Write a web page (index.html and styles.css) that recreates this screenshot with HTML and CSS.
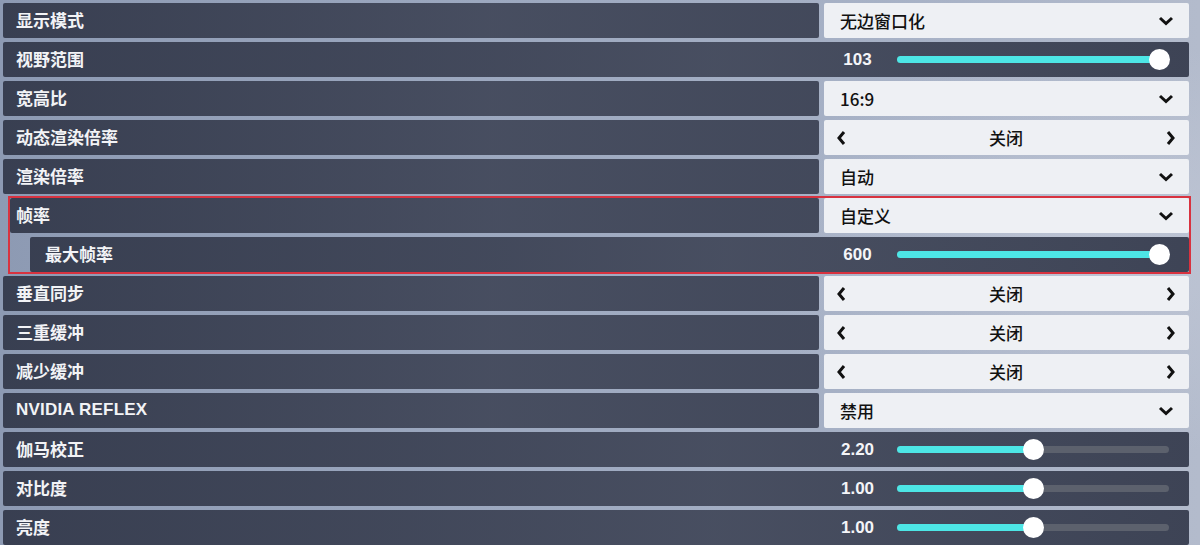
FILE: index.html
```html
<!DOCTYPE html>
<html lang="zh">
<head>
<meta charset="utf-8">
<link rel="stylesheet" href="styles.css">
</head>
<body>
<div class="panel">
  <div class="row"><div class="label">显示模式</div><div class="ctl dropdown"><span>无边窗口化</span><svg class="chev" viewBox="0 0 16 10"><path d="M2 2 L8 7.5 L14 2"/></svg></div></div>
  <div class="row slide"><div class="label">视野范围</div><div class="ctl slider"><span class="val">103</span><div class="track"><div class="fill" style="width:262px"></div><div class="knob" style="left:251.5px"></div></div></div></div>
  <div class="row"><div class="label">宽高比</div><div class="ctl dropdown"><span>16:9</span><svg class="chev" viewBox="0 0 16 10"><path d="M2 2 L8 7.5 L14 2"/></svg></div></div>
  <div class="row"><div class="label">动态渲染倍率</div><div class="ctl cycle"><svg class="arr" viewBox="0 0 10 16"><path d="M8 2 L3 8 L8 14"/></svg><span>关闭</span><svg class="arr" viewBox="0 0 10 16"><path d="M2 2 L7 8 L2 14"/></svg></div></div>
  <div class="row"><div class="label">渲染倍率</div><div class="ctl dropdown"><span>自动</span><svg class="chev" viewBox="0 0 16 10"><path d="M2 2 L8 7.5 L14 2"/></svg></div></div>
  <div class="group">
    <div class="row inner"><div class="label">帧率</div><div class="ctl dropdown"><span>自定义</span><svg class="chev" viewBox="0 0 16 10"><path d="M2 2 L8 7.5 L14 2"/></svg></div></div>
    <div class="row slide sub"><div class="label">最大帧率</div><div class="ctl slider"><span class="val">600</span><div class="track"><div class="fill" style="width:262px"></div><div class="knob" style="left:251.5px"></div></div></div></div>
  </div>
  <div class="row"><div class="label">垂直同步</div><div class="ctl cycle"><svg class="arr" viewBox="0 0 10 16"><path d="M8 2 L3 8 L8 14"/></svg><span>关闭</span><svg class="arr" viewBox="0 0 10 16"><path d="M2 2 L7 8 L2 14"/></svg></div></div>
  <div class="row"><div class="label">三重缓冲</div><div class="ctl cycle"><svg class="arr" viewBox="0 0 10 16"><path d="M8 2 L3 8 L8 14"/></svg><span>关闭</span><svg class="arr" viewBox="0 0 10 16"><path d="M2 2 L7 8 L2 14"/></svg></div></div>
  <div class="row"><div class="label">减少缓冲</div><div class="ctl cycle"><svg class="arr" viewBox="0 0 10 16"><path d="M8 2 L3 8 L8 14"/></svg><span>关闭</span><svg class="arr" viewBox="0 0 10 16"><path d="M2 2 L7 8 L2 14"/></svg></div></div>
  <div class="row"><div class="label latin">NVIDIA REFLEX</div><div class="ctl dropdown"><span>禁用</span><svg class="chev" viewBox="0 0 16 10"><path d="M2 2 L8 7.5 L14 2"/></svg></div></div>
  <div class="row slide"><div class="label">伽马校正</div><div class="ctl slider"><span class="val">2.20</span><div class="track"><div class="fill" style="width:136px"></div><div class="knob" style="left:125.5px"></div></div></div></div>
  <div class="row slide"><div class="label">对比度</div><div class="ctl slider"><span class="val">1.00</span><div class="track"><div class="fill" style="width:136px"></div><div class="knob" style="left:125.5px"></div></div></div></div>
  <div class="row slide"><div class="label">亮度</div><div class="ctl slider"><span class="val">1.00</span><div class="track"><div class="fill" style="width:136px"></div><div class="knob" style="left:125.5px"></div></div></div></div>
</div>
</body>
</html>
```

FILE: styles.css
```css
* { box-sizing: border-box; }
html, body { margin: 0; padding: 0; }
body {
  width: 1200px;
  height: 545px;
  overflow: hidden;
  font-family: "Liberation Sans", "Noto Sans CJK SC", sans-serif;
  background:
    radial-gradient(ellipse 500px 300px at 1100px 250px, rgba(200,206,220,0.55), rgba(200,206,220,0) 70%),
    linear-gradient(90deg, #8d9ab3 0%, #9ca8bf 40%, #a9b3c7 80%, #b3bbcc 100%);
}
.panel {
  width: 1189px;
  padding: 3px 0 0 3px;
  display: flex;
  flex-direction: column;
  gap: 4px;
}
.row {
  height: 35px;
  display: flex;
  gap: 5px;
}
.label {
  flex: 1;
  display: flex;
  align-items: center;
  padding: 0 0 2px 13px;
  color: #f2f3f6;
  font-weight: bold;
  font-size: 17px;
  background: linear-gradient(90deg, rgba(52,58,76,0.95), rgba(62,68,86,0.9) 60%, rgba(58,64,82,0.92));
  border-radius: 2px;
}
.label.latin { letter-spacing: 0.2px; padding-bottom: 1px; }
.ctl {
  width: 365px;
  display: flex;
  align-items: center;
  border-radius: 2px;
}
.dropdown, .cycle {
  background: #eef0f4;
  color: #111;
  font-size: 17px;
  font-weight: 500;
}
.dropdown { padding: 0 15px 0 16px; justify-content: space-between; }
.dropdown span { font-family: "Noto Sans CJK SC", "Liberation Sans", sans-serif; }
.chev { width: 16px; height: 10px; }
.chev path { fill: none; stroke: #111; stroke-width: 3; stroke-linejoin: miter; stroke-linecap: butt; }
.cycle { padding: 0 13px 0 12px; justify-content: space-between; }
.cycle span { font-family: "Noto Sans CJK SC", sans-serif; }
.arr { width: 10px; height: 16px; }
.arr path { fill: none; stroke: #111; stroke-width: 3; stroke-linejoin: miter; }

.slide {
  gap: 0;
  background: linear-gradient(90deg, rgba(52,58,76,0.95), rgba(62,68,86,0.9) 60%, rgba(55,61,79,0.95));
  border-radius: 2px;
}
.slide .label { background: none; }
.slider { padding-right: 20px; }
.val {
  width: 67px;
  text-align: center;
  color: #f4f5f8;
  font-weight: bold;
  font-size: 17px;
}
.track {
  margin-left: 6px;
  width: 272px;
  height: 7px;
  border-radius: 4px;
  background: #5c616d;
  position: relative;
}
.fill {
  height: 7px;
  border-radius: 4px;
  background: #4de6e6;
}
.knob {
  position: absolute;
  top: -7px;
  width: 21px;
  height: 21px;
  border-radius: 50%;
  background: #fff;
}

.group {
  position: relative;
  display: flex;
  flex-direction: column;
  gap: 4px;
}
.group::after {
  content: "";
  position: absolute;
  left: 5px;
  right: -2px;
  top: -2px;
  bottom: -2px;
  border: 2px solid #d8323f;
  pointer-events: none;
}
.inner { margin-left: 7px; }
.inner .label { padding-left: 6px; }
.sub { margin-left: 27px; }
.sub .label { padding-left: 15px; }
```
